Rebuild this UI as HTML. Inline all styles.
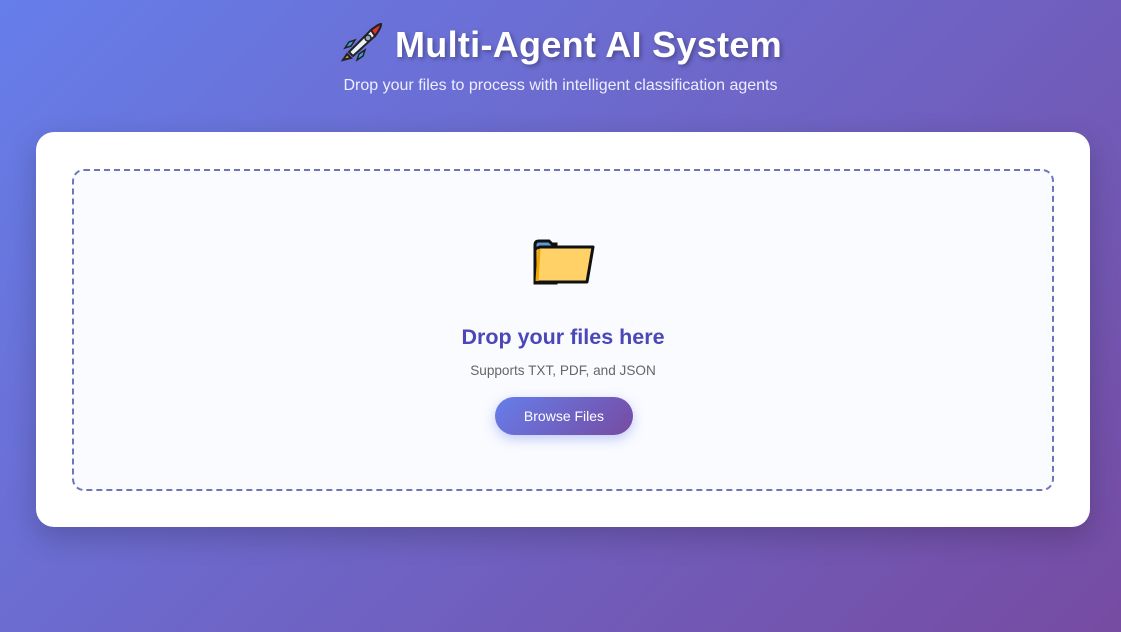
<!DOCTYPE html>
<html><head><meta charset="utf-8"><style>
*{margin:0;padding:0;box-sizing:border-box}
body{width:1121px;height:632px;overflow:hidden;background:linear-gradient(135deg,#667eea 0%,#764ba2 100%);font-family:"Liberation Sans","DejaVu Sans",sans-serif;position:relative}
h1{position:absolute;top:21px;left:0;width:1121px;text-align:center;color:#fff;font-size:36px;font-weight:bold;text-shadow:2px 2px 4px rgba(0,0,0,.3);line-height:42px;letter-spacing:0.3px}
h1 svg{vertical-align:-6px;margin-right:12px}
.sub{position:absolute;top:77px;left:0;width:1121px;text-align:center;color:#eef;font-size:16px}
.card{position:absolute;left:36px;top:132px;width:1054px;height:395px;background:#fff;border-radius:18px;box-shadow:0 10px 30px rgba(0,0,0,.2)}
.drop{position:absolute;left:36px;top:37px;width:982px;height:322px;border:2px dashed #6d75bd;border-radius:12px;background:#fafbff}
.t{position:absolute;top:154px;left:0;width:100%;text-align:center;font-size:21.5px;font-weight:bold;color:#4c47b8}
.s{position:absolute;top:192px;width:100%;text-align:center;font-size:13.6px;color:#666}
.btn{position:absolute;left:421px;top:226px;width:138px;height:38px;border-radius:19px;background:linear-gradient(135deg,#667eea,#764ba2);color:#fff;font-size:14px;text-align:center;line-height:38px;box-shadow:0 4px 12px rgba(102,126,234,.4)}
.folder{position:absolute;left:458px;top:66px}
</style></head><body>
<h1><svg width="44" height="42" viewBox="0 0 44 40"><path d="M8 32 l-4 6 8-2z" fill="#f39c12" stroke="#222" stroke-width="2"/><path d="M10 30 L32 8 Q40 2 42 2 Q42 6 36 14 L14 34z" fill="#e8f0f8" stroke="#222" stroke-width="2"/><path d="M32 8 Q40 2 42 2 Q42 6 36 14z" fill="#d33" stroke="#222" stroke-width="2"/><circle cx="29" cy="16" r="3" fill="#9ab" stroke="#222" stroke-width="1.5"/><path d="M12 24 l-6 2 4-6 6-2z M20 32 l-2 6 6-4 2-6z" fill="#3aa8e0" stroke="#222" stroke-width="1.5"/></svg>Multi-Agent AI System</h1>
<div class="sub">Drop your files to process with intelligent classification agents</div>
<div class="card"><div class="drop">
<svg class="folder" width="66" height="50" viewBox="0 0 66 50"><path d="M3 8 Q3 4 7 4 h10 l3 3 h4 V46 H3z" fill="#5b9bd5" stroke="#111" stroke-width="3"/><path d="M8 10 h53 l-6 35 H3 V12z" fill="#ffd166" stroke="#111" stroke-width="3" stroke-linejoin="round"/><path d="M7 12 l-2 32" stroke="#f0a500" stroke-width="3"/></svg>
<div class="t">Drop your files here</div>
<div class="s">Supports TXT, PDF, and JSON</div>
<div class="btn">Browse Files</div>
</div></div>
</body></html>
